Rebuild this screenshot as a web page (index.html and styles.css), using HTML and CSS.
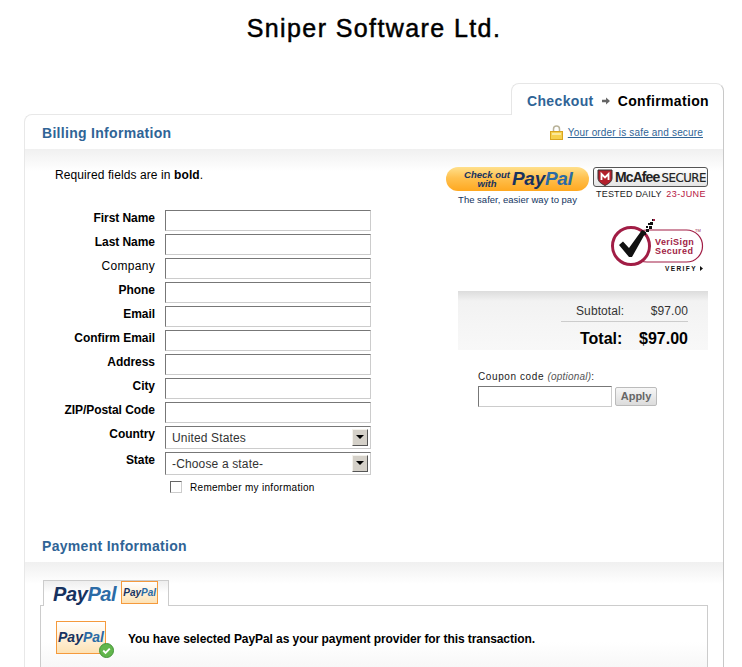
FILE: index.html
```html
<!DOCTYPE html>
<html lang="en">
<head>
  <meta charset="UTF-8">
  <meta name="viewport" content="width=device-width, initial-scale=1.0">
  <title>Sniper Software Ltd. - Checkout</title>
  <link rel="stylesheet" href="styles.css">
</head>
<body>
  <div class="page">
    <h1 class="site-title">Sniper Software Ltd.</h1>

    <div class="steps">
      <div class="steps-tab">
        <span class="step-link">Checkout</span>
        <svg class="step-arrow" width="9" height="8" viewBox="0 0 9 8"><path d="M0 2.5h4.5V0L9 4 4.5 8V5.5H0z" fill="#666"/></svg>
        <span class="step-current">Confirmation</span>
      </div>
    </div>

    <div class="main">
      <div class="section-head billing-head">
        <h2>Billing Information</h2>
        <div class="secure">
          <svg width="13" height="15" viewBox="0 0 13 15">
            <path d="M3.5 7V4a3 3 0 0 1 6 0v3" fill="none" stroke="#b9b39a" stroke-width="1.5"/>
            <rect x="0.5" y="6.5" width="12" height="8" fill="#f6d04d" stroke="#d9a520"/>
            <rect x="2" y="8" width="9" height="2" fill="#fbe89a"/>
          </svg>
          <a href="#">Your order is safe and secure</a>
        </div>
      </div>

      <div class="billing">
        <div class="billing-left">
          <p class="required">Required fields are in <b>bold</b>.</p>
          <div class="row req"><label>First Name</label><input type="text"></div>
          <div class="row req"><label>Last Name</label><input type="text"></div>
          <div class="row"><label>Company</label><input type="text"></div>
          <div class="row req"><label>Phone</label><input type="text"></div>
          <div class="row req"><label>Email</label><input type="text"></div>
          <div class="row req"><label>Confirm Email</label><input type="text"></div>
          <div class="row req"><label>Address</label><input type="text"></div>
          <div class="row req"><label>City</label><input type="text"></div>
          <div class="row req"><label>ZIP/Postal Code</label><input type="text"></div>
          <div class="row row-select req">
            <label>Country</label>
            <div class="select"><span>United States</span><i class="select-btn"></i></div>
          </div>
          <div class="row row-select req">
            <label>State</label>
            <div class="select"><span>-Choose a state-</span><i class="select-btn"></i></div>
          </div>
          <div class="remember"><span class="checkbox"></span>Remember my information</div>
        </div>

        <div class="billing-right">
          <div class="badges">
            <div class="pp-badge">
              <div class="pp-button">
                <span class="pp-small">Check out<br>with</span>
                <span class="pp-logo"><span class="pay">Pay</span><span class="pal">Pal</span></span>
              </div>
              <div class="pp-tag">The safer, easier way to pay</div>
            </div>
            <div class="mc-badge">
              <div class="mc-box">
                <svg width="16" height="17" viewBox="0 0 16 17"><path d="M1 1h14v8c0 4-4 6-7 7.500C5 15 1 13 1 9z" fill="#b3202c" stroke="#333"/><path d="M4.500 11V5l3.500 3.500L11.500 5v6" fill="none" stroke="#fff" stroke-width="1.800"/></svg>
                <span class="mc-name">McAfee</span><span class="mc-secure">SECURE</span>
              </div>
              <div class="mc-date">TESTED DAILY <em>23-JUNE</em></div>
            </div>
          </div>

          <svg class="verisign" width="100" height="60" viewBox="606 215 100 60">
            <rect x="631" y="230" width="71.500" height="32" rx="16" fill="#fff" stroke="#a11d45" stroke-width="1.200"/>
            <circle cx="631" cy="246" r="18.500" fill="#fff" stroke="#a11d45" stroke-width="3"/>
            <path d="M619 245l4-3.500 6 6.500 13-18 4 2-14 25h-3z" fill="#111"/>
            <path d="M643 232h3v-3h3v-3h3v3h-3v3h-3v3h-3zM646 226h2v2h-2zM650 222h3v3h-3zM648 223h2v2h-2zM652 219h2v2h-2z" fill="#111"/>
            <path d="M653 219h2v2h-2z" fill="#a11d45"/>
            <text x="655" y="245" class="vs-text">VeriSign</text>
            <text x="655" y="254" class="vs-text">Secured</text>
            <text x="695" y="232" class="vs-tm">TM</text>
            <text x="665" y="271" class="vs-verify">VERIFY</text>
            <path d="M700 266l3 2.500-3 2.500z" fill="#111"/>
          </svg>

          <div class="summary">
            <div class="subtotal"><span>Subtotal:</span><span>$97.00</span></div>
            <div class="total"><span>Total:</span><span>$97.00</span></div>
          </div>

          <div class="coupon">
            <div class="coupon-label">Coupon code <em>(optional)</em>:</div>
            <div class="coupon-row">
              <input type="text">
              <button type="button">Apply</button>
            </div>
          </div>
        </div>
      </div>

      <div class="section-head">
        <h2>Payment Information</h2>
      </div>

      <div class="payment">
        <div class="pay-tab">
          <span class="pp-logo pp-logo-tab"><span class="pay">Pay</span><span class="pal">Pal</span></span>
          <span class="pp-chip"><span class="pay">Pay</span><span class="pal">Pal</span></span>
        </div>
        <div class="pay-panel">
          <div class="pay-icon">
            <span class="pay">Pay</span><span class="pal">Pal</span>
            <svg class="pay-check" width="15" height="15" viewBox="0 0 16 16">
              <circle cx="8" cy="8" r="7.500" fill="#62b64c" stroke="#3f9134"/>
              <path d="M4.500 8l2.500 2.500 4.500-4.500" fill="none" stroke="#fff" stroke-width="2"/>
            </svg>
          </div>
          <p>You have selected PayPal as your payment provider for this transaction.</p>
        </div>
      </div>
    </div>
  </div>
</body>
</html>
```

FILE: styles.css
```css
/* Checkout page */
html, body {
  margin: 0;
  padding: 0;
  background: #fff;
}

body {
  font-family: "Liberation Sans", Arial, sans-serif;
  font-size: 12px;
  color: #000;
}

h2 {
  margin: 0;
}

input {
  background: #fff;
  border: 1px solid;
  border-color: #777 #ccc #ccc #777;
  border-radius: 0;
  outline: none;
}

.page {
  height: 667px;
  overflow: hidden;
  padding: 0 18px 0 24px;
}

.site-title {
  margin: 0;
  height: 83px;
  padding-top: 14px;
  box-sizing: border-box;
  font-size: 25px;
  line-height: 28px;
  font-weight: normal;
  letter-spacing: 1.4px;
  text-align: center;
  -webkit-text-stroke: 0.5px #000;
}

.steps {
  display: flex;
  justify-content: flex-end;
}

.steps-tab {
  position: relative;
  display: flex;
  align-items: center;
  box-sizing: border-box;
  width: 213px;
  height: 32px;
  margin-bottom: -1px;
  padding: 2px 14px 0 15px;
  background: #fff;
  border: 1px solid #e6e6e6;
  border-right-color: #c8c8c8;
  border-bottom: none;
  border-radius: 8px 8px 0 0;
  font-size: 14px;
  font-weight: bold;
  letter-spacing: 0.35px;
}

.step-link {
  color: #2f6496;
}

.step-arrow {
  margin: 0 8px;
}

.main {
  height: 560px;
  background: #fff;
  border: 1px solid #e8e8e8;
  border-right-color: #c8c8c8;
  border-radius: 8px 0 0 0;
}

.section-head {
  display: flex;
  align-items: center;
  justify-content: space-between;
  height: 32px;
  padding: 0 20px 0 17px;
}

.section-head h2 {
  font-size: 14px;
  line-height: 34px;
  color: #2f6496;
  letter-spacing: 0.3px;
}

.billing-head {
  height: 34px;
}

.billing-head h2 {
  margin-top: 2px;
}

.secure {
  display: flex;
  align-items: center;
  gap: 5px;
}

.secure a {
  font-size: 10px;
  letter-spacing: 0.17px;
  color: #2f6496;
}

.billing {
  display: flex;
  justify-content: space-between;
  height: 381px;
  background: linear-gradient(#f0f0f0, #fff) no-repeat;
  background-size: 100% 22px;
}

.billing-left {
  width: 370px;
  padding-top: 19px;
}

.required {
  margin: 0 0 27px 30px;
  line-height: 15px;
  letter-spacing: 0.1px;
}

.row {
  display: flex;
  height: 24px;
}

.row label {
  width: 130px;
  margin-right: 10px;
  padding-top: 1px;
  line-height: 15px;
  text-align: right;
  letter-spacing: 0.3px;
}

.row.req label {
  font-weight: bold;
  letter-spacing: -0.05px;
}

.row input {
  box-sizing: border-box;
  width: 206px;
  height: 21px;
  margin: 0;
  padding: 0;
}

.row-select {
  height: 26px;
}

.select {
  position: relative;
  box-sizing: border-box;
  width: 206px;
  height: 23px;
  padding-left: 6px;
  border: 1px solid;
  border-color: #777 #ccc #ccc #777;
  line-height: 23px;
  letter-spacing: 0.15px;
  color: #333;
}

.select-btn {
  position: absolute;
  top: 2px;
  right: 2px;
  box-sizing: border-box;
  width: 16px;
  height: 17px;
  background: #d4d0c8;
  border: 1px solid;
  border-color: #f4f2ec #555 #555 #f4f2ec;
}

.select-btn::after {
  content: "";
  position: absolute;
  top: 5px;
  left: 3px;
  border: 4px solid transparent;
  border-top: 4px solid #000;
  border-bottom: none;
}

.remember {
  display: flex;
  align-items: center;
  margin: 2px 0 0 145px;
  height: 14px;
  font-size: 10px;
  letter-spacing: 0.3px;
}

.checkbox {
  box-sizing: border-box;
  width: 12px;
  height: 12px;
  margin-right: 8px;
  border: 1px solid;
  border-color: #666 #ccc #ccc #666;
}

.billing-right {
  box-sizing: border-box;
  width: 262px;
  margin-right: 15px;
  padding-top: 18px;
}

.badges {
  display: flex;
  justify-content: space-between;
}

.pp-button {
  display: flex;
  align-items: center;
  box-sizing: border-box;
  width: 143px;
  height: 24px;
  padding-left: 16px;
  background: linear-gradient(#ffe08c, #ffc14f 45%, #ffa820);
  border-radius: 12px;
}

.pay {
  color: #17325f;
}

.pal {
  color: #2b6ba6;
}

.pp-small {
  width: 50px;
  font-size: 9.5px;
  line-height: 9.5px;
  font-weight: bold;
  font-style: italic;
  text-align: center;
  color: #17325f;
}

.pp-logo {
  font-size: 19px;
  line-height: 20px;
  font-weight: bold;
  font-style: italic;
  letter-spacing: -0.3px;
}

.pp-tag {
  margin-top: 3px;
  font-size: 9.5px;
  line-height: 12px;
  text-align: center;
  color: #14365f;
}

.mc-badge {
  width: 115px;
}

.mc-box {
  display: flex;
  align-items: center;
  box-sizing: border-box;
  height: 20px;
  padding-left: 3px;
  background: linear-gradient(#fff, #e4e4e4);
  border: 1px solid #555;
  border-radius: 3px;
  color: #222;
}

.mc-name {
  margin-left: 2px;
  font-size: 14px;
  font-weight: bold;
  letter-spacing: -0.9px;
}

.mc-secure {
  margin-left: 2px;
  font-family: "DejaVu Sans Condensed", "Liberation Sans", sans-serif;
  font-size: 13px;
  letter-spacing: -0.4px;
  -webkit-text-stroke: 0.2px #222;
}

.mc-date {
  display: flex;
  justify-content: space-between;
  margin-top: 1px;
  padding: 0 2px 0 3px;
  font-size: 9px;
  line-height: 12px;
  white-space: nowrap;
  letter-spacing: 0.2px;
  color: #222;
}

.mc-date em {
  font-style: normal;
  letter-spacing: 0.45px;
  color: #b5153f;
}

.verisign {
  display: block;
  margin: 9px 0 0 160px;
}

.vs-text {
  font-size: 9px;
  font-weight: bold;
  letter-spacing: 0.4px;
  fill: #a11d45;
}

.vs-tm {
  font-size: 4px;
  fill: #a11d45;
}

.vs-verify {
  font-size: 6.5px;
  font-weight: bold;
  letter-spacing: 1.4px;
  fill: #111;
}

.summary {
  box-sizing: border-box;
  height: 59px;
  margin: 16px 0 0 12px;
  padding: 13px 20px 0 103px;
  background: linear-gradient(#dcdcdc, #f2f2f2 10px, #f8f8f8);
}

.subtotal {
  display: flex;
  justify-content: space-between;
  height: 17px;
  padding-left: 15px;
  line-height: 15px;
  letter-spacing: 0.1px;
  color: #333;
  border-bottom: 1px solid #ccc;
}

.subtotal span:first-child {
  width: 74px;
}

.total {
  display: flex;
  justify-content: space-between;
  padding: 6px 0 0 19px;
  font-size: 16px;
  line-height: 21px;
  font-weight: bold;
}

.total span:first-child {
  width: 59px;
}

.coupon {
  margin: 21px 0 0 32px;
}

.coupon-label {
  font-size: 10px;
  line-height: 12px;
  letter-spacing: 0.6px;
  color: #222;
}

.coupon-label em {
  color: #555;
  letter-spacing: 0.2px;
}

.coupon-row {
  display: flex;
  align-items: flex-start;
  gap: 3px;
  margin-top: 3px;
}

.coupon-row input {
  box-sizing: border-box;
  width: 134px;
  height: 21px;
  margin: 0;
  padding: 0;
}

.coupon-row button {
  box-sizing: border-box;
  width: 42px;
  height: 19px;
  margin: 1px 0 0;
  padding: 0 0 2px;
  background: linear-gradient(#f6f6f6, #dcdcdc);
  border: 1px solid #bbb;
  border-radius: 2px;
  font-family: inherit;
  font-size: 11px;
  font-weight: bold;
  color: #666;
}

.payment {
  padding: 18px 15px 0;
  background: linear-gradient(#f0f0f0, #fff) no-repeat;
  background-size: 100% 22px;
}

.pay-tab {
  position: relative;
  display: flex;
  align-items: center;
  gap: 5px;
  box-sizing: border-box;
  width: 126px;
  height: 26px;
  margin: 0 0 -1px 3px;
  padding-left: 9px;
  background: linear-gradient(#eeeeee, #fff 12px);
  border: 1px solid #ccc;
  border-bottom: none;
}

.pp-logo-tab {
  font-size: 20px;
  letter-spacing: -0.4px;
}

.pp-chip {
  box-sizing: border-box;
  width: 37px;
  height: 23px;
  margin-top: -2px;
  background: linear-gradient(#fff, #fde2b5);
  border: 1px solid #f59a3c;
  font-size: 10px;
  line-height: 21px;
  font-weight: bold;
  font-style: italic;
  text-align: center;
}

.pay-panel {
  display: flex;
  align-items: flex-start;
  height: 100px;
  padding: 15px 15px 0;
  box-sizing: border-box;
  background: linear-gradient(#fff 36px, #ececec);
  border: 1px solid #ccc;
}

.pay-panel p {
  margin: 11px 0 0;
  font-weight: bold;
  letter-spacing: -0.07px;
}

.pay-icon {
  position: relative;
  box-sizing: border-box;
  width: 50px;
  height: 33px;
  margin-right: 22px;
  background: linear-gradient(#fff, #fde2b5);
  border: 1px solid #f59a3c;
  font-size: 14px;
  line-height: 31px;
  font-weight: bold;
  font-style: italic;
  text-align: center;
}

.pay-check {
  position: absolute;
  right: -9px;
  bottom: -5px;
}
```
